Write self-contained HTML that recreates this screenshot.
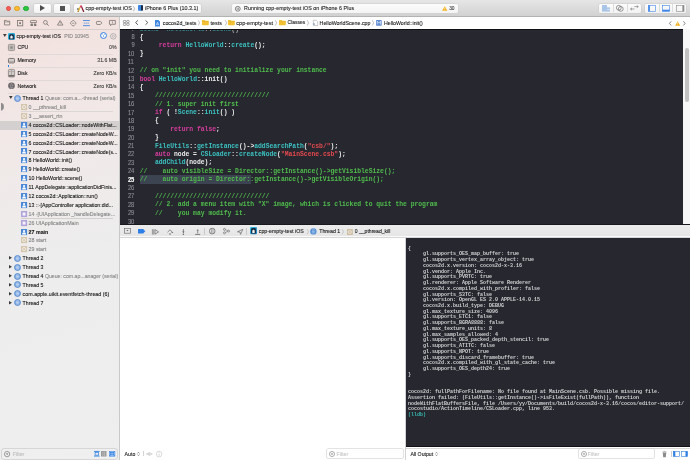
<!DOCTYPE html><html><head><meta charset="utf-8"><style>html,body{margin:0;padding:0;width:690px;height:460px;overflow:hidden;position:relative;background:#fff;font-family:"Liberation Sans",sans-serif}</style></head><body><div style="position:absolute;left:0;top:0;width:690px;height:460px;will-change:transform">
<div style="position:absolute;left:0px;top:0px;width:690px;height:16.5px;background:linear-gradient(#e6e6e6,#d0d0d0);"></div>
<div style="position:absolute;left:0px;top:16px;width:690px;height:0.6px;background:#b3b3b3;"></div>
<div style="position:absolute;left:5.5px;top:5.5px;width:5.8px;height:5.8px;border-radius:50%;background:#fc5f57;box-sizing:border-box;border:0.3px solid #de4a42;"></div>
<div style="position:absolute;left:14.200000000000001px;top:5.5px;width:5.8px;height:5.8px;border-radius:50%;background:#fdbb2e;box-sizing:border-box;border:0.3px solid #dea123;"></div>
<div style="position:absolute;left:23.0px;top:5.5px;width:5.8px;height:5.8px;border-radius:50%;background:#29c73f;box-sizing:border-box;border:0.3px solid #1caa2d;"></div>
<div style="position:absolute;left:34.4px;top:3.8px;width:16.2px;height:9.2px;background:linear-gradient(#fdfdfd,#f3f3f3);border-radius:1.6px;box-shadow:0 0 0 0.5px #c6c6c6, 0 0.4px 0.4px rgba(0,0,0,0.12);box-sizing:border-box;"></div>
<svg style="position:absolute;left:40px;top:5.2px;overflow:visible" width="5" height="6" viewBox="0 0 5 6"><path d="M0 0 L5 3 L0 6 Z" fill="#4d4d4d"/></svg>
<div style="position:absolute;left:54.3px;top:3.8px;width:16px;height:9.2px;background:linear-gradient(#fdfdfd,#f3f3f3);border-radius:1.6px;box-shadow:0 0 0 0.5px #c6c6c6, 0 0.4px 0.4px rgba(0,0,0,0.12);box-sizing:border-box;"></div>
<div style="position:absolute;left:60.1px;top:5.8px;width:4.9px;height:5.2px;background:#545454;"></div>
<div style="position:absolute;left:74.3px;top:3.8px;width:126.3px;height:9.2px;background:linear-gradient(#fdfdfd,#f3f3f3);border-radius:1.6px;box-shadow:0 0 0 0.5px #c6c6c6, 0 0.4px 0.4px rgba(0,0,0,0.12);box-sizing:border-box;"></div>
<svg style="position:absolute;left:76.6px;top:4.9px;overflow:visible" width="7.4" height="6.8" viewBox="0 0 7.4 6.8"><path d="M4.3 1.2 L6.6 6.4" stroke="#8c1d3c" stroke-width="1.3" stroke-linecap="round"/><path d="M3.6 1.2 L1.1 6.4" stroke="#e8b72a" stroke-width="1.3" stroke-linecap="round"/><circle cx="3.95" cy="1.5" r="0.9" fill="#d6338c"/><circle cx="0.9" cy="3.9" r="0.75" fill="#1e1e2a"/><circle cx="1.2" cy="6.2" r="0.55" fill="#6a4a3a"/><circle cx="6.5" cy="6.2" r="0.55" fill="#6a3a2a"/><path d="M3.0 3.6 L4.6 3.2" stroke="#fff3d0" stroke-width="0.5"/></svg>
<div style="position:absolute;left:85.6px;top:5.41px;height:7.59px;line-height:7.59px;font-size:5.42px;color:#1e1e1e;font-weight:normal;font-family:'Liberation Sans', sans-serif;white-space:pre;-webkit-text-stroke:0.1px #1e1e1e;">cpp-empty-test iOS</div>
<svg style="position:absolute;left:133.4px;top:5.8px;overflow:visible" width="2" height="5.4" viewBox="0 0 2 5.4"><path d="M0.3 0.2 L1.6 2.7 L0.3 5.2" stroke="#8a8a8a" stroke-width="0.55" fill="none"/></svg>
<svg style="position:absolute;left:137.9px;top:5.4px;overflow:visible" width="5" height="5.8" viewBox="0 0 5 5.8"><rect x="0" y="0" width="4.6" height="5.8" rx="0.7" fill="#3a86e0"/><rect x="3" y="0.3" width="2" height="5.2" rx="0.5" fill="#1d2a44"/></svg>
<div style="position:absolute;left:145px;top:5.42px;height:7.56px;line-height:7.56px;font-size:5.4px;color:#1e1e1e;font-weight:normal;font-family:'Liberation Sans', sans-serif;white-space:pre;-webkit-text-stroke:0.1px #1e1e1e;">iPhone 6 Plus (10.3.1)</div>
<div style="position:absolute;left:232px;top:3.8px;width:226px;height:9.2px;background:linear-gradient(#fbfbfb,#f4f4f4);border-radius:1.6px;box-shadow:0 0 0 0.5px #cdcdcd;"></div>
<svg style="position:absolute;left:235px;top:5.7px;overflow:visible" width="5.6" height="5.6" viewBox="0 0 5.6 5.6"><circle cx="2.8" cy="2.8" r="2.4" fill="none" stroke="#5a5a5a" stroke-width="0.75"/><path d="M2.15 1.7 V3.9 M3.45 1.7 V3.9" stroke="#5a5a5a" stroke-width="0.6"/></svg>
<div style="position:absolute;left:244.1px;top:5.49px;height:7.42px;line-height:7.42px;font-size:5.3px;color:#1e1e1e;font-weight:normal;font-family:'Liberation Sans', sans-serif;white-space:pre;-webkit-text-stroke:0.1px #1e1e1e;letter-spacing:0.045px;">Running cpp-empty-test iOS on iPhone 6 Plus</div>
<svg style="position:absolute;left:441.7px;top:5.5px;overflow:visible" width="5.5" height="5" viewBox="0 0 5.5 5"><path d="M2.75 0.2 L5.4 4.8 L0.1 4.8 Z" fill="#f2b11c"/><path d="M2.75 1.6 V3.3" stroke="#fff" stroke-width="0.6"/><circle cx="2.75" cy="4.1" r="0.3" fill="#fff"/></svg>
<div style="position:absolute;left:449.2px;top:5.84px;height:6.72px;line-height:6.72px;font-size:4.8px;color:#3a3a3a;font-weight:normal;font-family:'Liberation Sans', sans-serif;white-space:pre;-webkit-text-stroke:0.1px #3a3a3a;">30</div>
<div style="position:absolute;left:599.3px;top:3.6px;width:41.7px;height:9.4px;background:linear-gradient(#fcfcfc,#f2f2f2);border-radius:1.6px;box-shadow:0 0 0 0.5px #cacaca;"></div>
<div style="position:absolute;left:613px;top:4.4px;width:0.5px;height:7.8px;background:#dcdcdc;"></div>
<div style="position:absolute;left:627.2px;top:4.4px;width:0.5px;height:7.8px;background:#dcdcdc;"></div>
<div style="position:absolute;left:644.7px;top:3.6px;width:41.3px;height:9.4px;background:linear-gradient(#fcfcfc,#f2f2f2);border-radius:1.6px;box-shadow:0 0 0 0.5px #cacaca;"></div>
<div style="position:absolute;left:658.5px;top:4.4px;width:0.5px;height:7.8px;background:#dcdcdc;"></div>
<div style="position:absolute;left:672.2px;top:4.4px;width:0.5px;height:7.8px;background:#dcdcdc;"></div>
<svg style="position:absolute;left:602.2px;top:5px;overflow:visible" width="8" height="6.6" viewBox="0 0 8 6.6"><rect x="0" y="0" width="5" height="6.6" fill="#a8c4e6"/><rect x="5" y="2.6" width="3" height="1" fill="#7aa5dc"/><rect x="5" y="4.6" width="3" height="2" fill="#a8c4e6"/></svg>
<svg style="position:absolute;left:616.3px;top:5px;overflow:visible" width="7.6" height="6.6" viewBox="0 0 7.6 6.6"><circle cx="2.8" cy="2.8" r="2.4" fill="none" stroke="#6e6e6e" stroke-width="0.7"/><circle cx="4.8" cy="3.9" r="2.4" fill="none" stroke="#6e6e6e" stroke-width="0.7"/></svg>
<svg style="position:absolute;left:630px;top:5.4px;overflow:visible" width="8.8" height="5.6" viewBox="0 0 8.8 5.6"><path d="M0.5 4 H4.5 M0.5 4 L2 2.8 M0.5 4 L2 5.2" stroke="#6e6e6e" stroke-width="0.6" fill="none"/><path d="M4.3 1.6 H8.3 M8.3 1.6 L6.8 0.4 M8.3 1.6 L6.8 2.8" stroke="#6e6e6e" stroke-width="0.6" fill="none"/></svg>
<svg style="position:absolute;left:647.8px;top:5px;overflow:visible" width="7.8" height="6.6" viewBox="0 0 7.8 6.6"><rect x="0.3" y="0.3" width="7.2" height="6" fill="none" stroke="#3f86e8" stroke-width="0.6"/><rect x="0.3" y="0.3" width="1.6" height="6" fill="#3f86e8"/></svg>
<svg style="position:absolute;left:661.7px;top:5px;overflow:visible" width="8" height="6.6" viewBox="0 0 8 6.6"><rect x="0.3" y="0.3" width="7.4" height="6" fill="none" stroke="#3f86e8" stroke-width="0.6"/><rect x="0.3" y="4.7" width="7.4" height="1.6" fill="#3f86e8"/></svg>
<svg style="position:absolute;left:675.5px;top:5px;overflow:visible" width="8.3" height="6.6" viewBox="0 0 8.3 6.6"><rect x="0.3" y="0.3" width="7.7" height="6" fill="none" stroke="#8a8a8a" stroke-width="0.6"/><rect x="6.4" y="0.3" width="1.6" height="6" fill="#8a8a8a"/></svg>
<div style="position:absolute;left:0px;top:16.6px;width:119.5px;height:443.4px;background:linear-gradient(165deg,#f3e1dd 0%,#f1e8e7 25%,#ededed 55%,#eeeeee 100%);"></div>
<div style="position:absolute;left:119.4px;top:16.6px;width:0.7px;height:443.4px;background:#c9c9c9;"></div>
<div style="position:absolute;left:0px;top:28.9px;width:119.5px;height:0.5px;background:#d9d0ce;"></div>
<svg style="position:absolute;left:3.8px;top:20.4px;overflow:visible" width="6.2" height="5.4" viewBox="0 0 6.2 5.4"><path d="M0.45 0.45 H2.4 L3 1.2 H5.75 V4.95 H0.45 Z" fill="none" stroke="#7f7975" stroke-width="0.85" stroke-linejoin="round"/><path d="M0.45 1.9 H5.75" stroke="#7f7975" stroke-width="0.6"/></svg>
<svg style="position:absolute;left:16.8px;top:19.9px;overflow:visible" width="6.2" height="6.3" viewBox="0 0 6.2 6.3"><rect x="0.45" y="0.45" width="5.3" height="5.4" fill="none" stroke="#7f7975" stroke-width="0.85"/><rect x="2.2" y="2.2" width="1.8" height="1.9" fill="#7f7975"/></svg>
<svg style="position:absolute;left:29.9px;top:20.1px;overflow:visible" width="6.9" height="6" viewBox="0 0 6.9 6"><path d="M0.45 2.6 V1.2 Q0.45 0.45 1.2 0.45 H5.7 Q6.45 0.45 6.45 1.2 V2.6 Z" fill="none" stroke="#7f7975" stroke-width="0.85"/><path d="M1.9 2.6 V4.4 M5 2.6 V4.4" stroke="#7f7975" stroke-width="0.85"/><rect x="0.5" y="4.1" width="2.5" height="1.8" rx="0.5" fill="#7f7975"/><rect x="3.9" y="4.1" width="2.5" height="1.8" rx="0.5" fill="#7f7975"/></svg>
<svg style="position:absolute;left:43.3px;top:20.1px;overflow:visible" width="5.8" height="5.8" viewBox="0 0 5.8 5.8"><circle cx="2.4" cy="2.4" r="1.9" fill="none" stroke="#7f7975" stroke-width="0.85"/><path d="M3.8 3.8 L5.4 5.5" stroke="#7f7975" stroke-width="0.95" stroke-linecap="round"/></svg>
<svg style="position:absolute;left:56.9px;top:20.4px;overflow:visible" width="6.4" height="5.6" viewBox="0 0 6.4 5.6"><path d="M3.2 0.5 L5.95 5.1 H0.45 Z" fill="none" stroke="#7f7975" stroke-width="0.85" stroke-linejoin="round"/><path d="M3.2 2 V3.6" stroke="#7f7975" stroke-width="0.7"/></svg>
<svg style="position:absolute;left:69.9px;top:19.8px;overflow:visible" width="6.4" height="6.4" viewBox="0 0 6.4 6.4"><path d="M3.2 0.45 Q3.9 0.45 4.8 1.6 Q5.95 2.5 5.95 3.2 Q5.95 3.9 4.8 4.8 Q3.9 5.95 3.2 5.95 Q2.5 5.95 1.6 4.8 Q0.45 3.9 0.45 3.2 Q0.45 2.5 1.6 1.6 Q2.5 0.45 3.2 0.45 Z" fill="none" stroke="#7f7975" stroke-width="0.85"/><path d="M2 3.2 H4.4" stroke="#7f7975" stroke-width="0.7"/></svg>
<svg style="position:absolute;left:82.7px;top:20.0px;overflow:visible" width="6.9" height="6.1" viewBox="0 0 6.9 6.1"><rect x="0" y="0" width="6.9" height="0.85" fill="#3a82de"/><rect x="0" y="5.25" width="6.9" height="0.85" fill="#3a82de"/><path d="M0.8 3.05 H6.1" stroke="#5b95df" stroke-width="1.2" stroke-dasharray="0.55 0.35 0.55 0.6"/></svg>
<svg style="position:absolute;left:96.1px;top:21.1px;overflow:visible" width="6.3" height="3.9" viewBox="0 0 6.3 3.9"><path d="M1.1 0.45 H4.5 L5.85 1.95 L4.5 3.45 H1.1 Q0.45 3.45 0.45 2.8 V1.1 Q0.45 0.45 1.1 0.45 Z" fill="none" stroke="#7f7975" stroke-width="0.85"/></svg>
<svg style="position:absolute;left:109.2px;top:20.0px;overflow:visible" width="6.8" height="6.2" viewBox="0 0 6.8 6.2"><path d="M0.45 0.45 H6.35 V4.3 H2.7 L1.5 5.7 V4.3 H0.45 Z" fill="none" stroke="#7f7975" stroke-width="0.85" stroke-linejoin="round"/><path d="M3.4 1.3 V3.4" stroke="#7f7975" stroke-width="0.7"/></svg>
<svg style="position:absolute;left:2.9px;top:34.199999999999996px;overflow:visible" width="3.6" height="3.0" viewBox="0 0 3.6 3.0"><path d="M0 0 H3.6 L1.8 3.0 Z" fill="#3a3a3a"/></svg>
<svg style="position:absolute;left:7.8px;top:32.5px;overflow:visible" width="7" height="6.8" viewBox="0 0 7 6.8"><defs><linearGradient id="ag" x1="0" y1="0" x2="1" y2="1"><stop offset="0" stop-color="#35c4e8"/><stop offset="1" stop-color="#1a7fb8"/></linearGradient></defs><rect x="0" y="0" width="7" height="6.8" rx="1.2" fill="url(#ag)"/><path d="M1.2 6.2 V2.6 Q1.2 1.2 2.6 1.2 H4.4 Q5.8 1.2 5.8 2.6 V6.2 Z" fill="#15263a"/><path d="M2.3 5.6 V3.4 L3.5 2.3 L4.7 3.4 V5.6 Z" fill="#f2f2f2"/></svg>
<div style="position:absolute;left:16.5px;top:32.96px;height:7.28px;line-height:7.28px;font-size:5.2px;color:#161616;font-weight:normal;font-family:'Liberation Sans', sans-serif;white-space:pre;-webkit-text-stroke:0.1px #161616;">cpp-empty-test iOS</div>
<div style="position:absolute;left:64.3px;top:32.96px;height:7.28px;line-height:7.28px;font-size:5.2px;color:#858585;font-weight:normal;font-family:'Liberation Sans', sans-serif;white-space:pre;-webkit-text-stroke:0.1px #858585;">PID 10945</div>
<svg style="position:absolute;left:100.1px;top:32.4px;overflow:visible" width="7" height="7" viewBox="0 0 7 7"><circle cx="3.5" cy="3.5" r="2.95" fill="#fdfdfd" stroke="#2a76e2" stroke-width="0.95"/><path d="M3.3 4.9 L3.5 3.4 L4.7 2.3" fill="none" stroke="#2a76e2" stroke-width="0.6"/><path d="M1.6 2.6 Q2.2 1.9 3 1.8" fill="none" stroke="#2a76e2" stroke-width="0.45"/></svg>
<svg style="position:absolute;left:110.0px;top:32.7px;overflow:visible" width="6.6" height="6.6" viewBox="0 0 6.6 6.6"><circle cx="3.3" cy="3.3" r="2.8" fill="none" stroke="#a6a6a6" stroke-width="0.8"/><circle cx="3.3" cy="3.3" r="1.1" fill="none" stroke="#a6a6a6" stroke-width="0.6"/></svg>
<svg style="position:absolute;left:7.8px;top:43.9px;overflow:visible" width="7" height="7" viewBox="0 0 7 7"><rect x="0.4" y="0.4" width="6.2" height="6.2" rx="1" fill="#c4bebb" stroke="#8e8885" stroke-width="0.8"/><rect x="2.3" y="2.3" width="2.4" height="2.4" fill="#8e8885"/></svg>
<svg style="position:absolute;left:7.8px;top:57.6px;overflow:visible" width="7" height="5.4" viewBox="0 0 7 5.4"><rect x="0.45" y="0.45" width="6.1" height="4.5" rx="0.9" fill="#d3cdca" stroke="#6e6866" stroke-width="0.9"/><path d="M1 3.4 H6" stroke="#8e8885" stroke-width="0.5"/></svg>
<svg style="position:absolute;left:7.8px;top:69.0px;overflow:visible" width="7" height="8.4" viewBox="0 0 7 8.4"><rect x="0.4" y="0.4" width="6.2" height="7.6" rx="1" fill="#d2ccc9" stroke="#8a8482" stroke-width="0.8"/><path d="M3.5 0.8 V6 M1 2.5 H2.8 M4.2 2.5 H6" stroke="#8a8482" stroke-width="0.5"/><rect x="0.8" y="6" width="5.4" height="1.6" fill="#6e6866"/></svg>
<svg style="position:absolute;left:7.8px;top:82.1px;overflow:visible" width="7" height="7.4" viewBox="0 0 7 7.4"><circle cx="3.5" cy="3.7" r="3.3" fill="#5a5658"/><path d="M0.5 3.7 H6.5 M3.5 0.5 Q1.4 3.7 3.5 6.9 Q5.6 3.7 3.5 0.5 M1 2.1 H6 M1 5.3 H6" stroke="#bdb9ba" stroke-width="0.4" fill="none"/></svg>
<div style="position:absolute;left:8.0px;top:64.8px;width:0.8px;height:2.2px;background:#2f7fe2;"></div>
<div style="position:absolute;left:17.4px;top:43.76px;height:7.28px;line-height:7.28px;font-size:5.2px;color:#161616;font-weight:normal;font-family:'Liberation Sans', sans-serif;white-space:pre;-webkit-text-stroke:0.1px #161616;">CPU</div>
<div style="position:absolute;right:573.4px;top:43.76px;height:7.28px;line-height:7.28px;font-size:5.2px;color:#3e3e3e;font-weight:normal;font-family:'Liberation Sans', sans-serif;white-space:pre;-webkit-text-stroke:0.1px #3e3e3e;">0%</div>
<div style="position:absolute;left:17.4px;top:57.16px;height:7.28px;line-height:7.28px;font-size:5.2px;color:#161616;font-weight:normal;font-family:'Liberation Sans', sans-serif;white-space:pre;-webkit-text-stroke:0.1px #161616;">Memory</div>
<div style="position:absolute;right:573.4px;top:57.16px;height:7.28px;line-height:7.28px;font-size:5.2px;color:#3e3e3e;font-weight:normal;font-family:'Liberation Sans', sans-serif;white-space:pre;-webkit-text-stroke:0.1px #3e3e3e;">31.6 MB</div>
<div style="position:absolute;left:17.4px;top:70.36px;height:7.28px;line-height:7.28px;font-size:5.2px;color:#161616;font-weight:normal;font-family:'Liberation Sans', sans-serif;white-space:pre;-webkit-text-stroke:0.1px #161616;">Disk</div>
<div style="position:absolute;right:573.4px;top:70.36px;height:7.28px;line-height:7.28px;font-size:5.2px;color:#3e3e3e;font-weight:normal;font-family:'Liberation Sans', sans-serif;white-space:pre;-webkit-text-stroke:0.1px #3e3e3e;">Zero KB/s</div>
<div style="position:absolute;left:17.4px;top:82.96px;height:7.28px;line-height:7.28px;font-size:5.2px;color:#161616;font-weight:normal;font-family:'Liberation Sans', sans-serif;white-space:pre;-webkit-text-stroke:0.1px #161616;">Network</div>
<div style="position:absolute;right:573.4px;top:82.96px;height:7.28px;line-height:7.28px;font-size:5.2px;color:#3e3e3e;font-weight:normal;font-family:'Liberation Sans', sans-serif;white-space:pre;-webkit-text-stroke:0.1px #3e3e3e;">Zero KB/s</div>
<div style="position:absolute;left:7.8px;top:54.3px;width:105.2px;height:0.5px;background:#e0d9d8;"></div>
<div style="position:absolute;left:7.8px;top:67.2px;width:105.2px;height:0.5px;background:#e0d9d8;"></div>
<div style="position:absolute;left:7.8px;top:79.9px;width:105.2px;height:0.5px;background:#e0d9d8;"></div>
<div style="position:absolute;left:7.8px;top:93.0px;width:105.2px;height:0.5px;background:#e0d9d8;"></div>
<div style="position:absolute;left:0px;top:121.0px;width:119.4px;height:8.5px;background:#d4d0cf;"></div>
<svg style="position:absolute;left:0.9px;top:102.9px;overflow:visible" width="3" height="7.4" viewBox="0 0 3 7.4"><path d="M0 0 H1 Q3 0.8 3 3.7 Q3 6.6 1 7.4 H0 Z" fill="#8d8d8d"/></svg>
<svg style="position:absolute;left:9.1px;top:96.4px;overflow:visible" width="3.6" height="3.0" viewBox="0 0 3.6 3.0"><path d="M0 0 H3.6 L1.8 3.0 Z" fill="#3a3a3a"/></svg>
<svg style="position:absolute;left:14.1px;top:94.5px;overflow:visible" width="7" height="7" viewBox="0 0 7 7"><circle cx="3.5" cy="3.5" r="3.0" fill="#86aee2" stroke="#4f86cf" stroke-width="0.8"/><path d="M2.2 2.2 H4.8 M2.0 3.5 H5.0 M2.2 4.8 H4.8" stroke="#e6eefa" stroke-width="0.5"/></svg>
<div style="position:absolute;left:22.6px;top:95.16px;height:7.28px;line-height:7.28px;font-size:5.2px;color:#161616;font-weight:normal;font-family:'Liberation Sans', sans-serif;white-space:pre;-webkit-text-stroke:0.1px #161616;">Thread 1</div>
<div style="position:absolute;left:44.9px;top:95.16px;height:7.28px;line-height:7.28px;font-size:5.2px;color:#888888;font-weight:normal;font-family:'Liberation Sans', sans-serif;white-space:pre;-webkit-text-stroke:0.1px #888888;">Queue: com.a...-thread (serial)</div>
<svg style="position:absolute;left:20.5px;top:103.9px;overflow:visible" width="6.1" height="6.1" viewBox="0 0 6.1 6.1"><rect x="0" y="0" width="6.1" height="6.1" fill="#d3c6ad"/><circle cx="3.05" cy="3.05" r="1.6" fill="none" stroke="#fff" stroke-width="0.6"/><path d="M2.6 3.05 L3.4 2.4" stroke="#fff" stroke-width="0.5"/></svg>
<div style="position:absolute;left:28.6px;top:103.99px;height:7.42px;line-height:7.42px;font-size:5.3px;color:#858585;font-weight:normal;font-family:'Liberation Sans', sans-serif;white-space:pre;-webkit-text-stroke:0.1px #858585;">0 __pthread_kill</div>
<svg style="position:absolute;left:20.5px;top:112.8px;overflow:visible" width="6.1" height="6.1" viewBox="0 0 6.1 6.1"><rect x="0" y="0" width="6.1" height="6.1" fill="#d3c6ad"/><circle cx="3.05" cy="3.05" r="1.6" fill="none" stroke="#fff" stroke-width="0.6"/><path d="M2.6 3.05 L3.4 2.4" stroke="#fff" stroke-width="0.5"/></svg>
<div style="position:absolute;left:28.6px;top:112.89px;height:7.42px;line-height:7.42px;font-size:5.3px;color:#858585;font-weight:normal;font-family:'Liberation Sans', sans-serif;white-space:pre;-webkit-text-stroke:0.1px #858585;">3 __assert_rtn</div>
<svg style="position:absolute;left:20.5px;top:121.7px;overflow:visible" width="6.1" height="6.1" viewBox="0 0 6.1 6.1"><rect x="0" y="0" width="6.1" height="6.1" fill="#4b89d8"/><circle cx="3.05" cy="2.1" r="1.1" fill="#fff"/><path d="M1 5.4 Q1.2 3.3 3.05 3.3 Q4.9 3.3 5.1 5.4 Z" fill="#fff"/></svg>
<div style="position:absolute;left:28.6px;top:121.85px;height:7.31px;line-height:7.31px;font-size:5.22px;color:#161616;font-weight:normal;font-family:'Liberation Sans', sans-serif;white-space:pre;-webkit-text-stroke:0.1px #161616;">4 cocos2d::CSLoader::nodeWithFlat...</div>
<svg style="position:absolute;left:20.5px;top:130.6px;overflow:visible" width="6.1" height="6.1" viewBox="0 0 6.1 6.1"><rect x="0" y="0" width="6.1" height="6.1" fill="#4b89d8"/><circle cx="3.05" cy="2.1" r="1.1" fill="#fff"/><path d="M1 5.4 Q1.2 3.3 3.05 3.3 Q4.9 3.3 5.1 5.4 Z" fill="#fff"/></svg>
<div style="position:absolute;left:28.6px;top:130.75px;height:7.31px;line-height:7.31px;font-size:5.22px;color:#161616;font-weight:normal;font-family:'Liberation Sans', sans-serif;white-space:pre;-webkit-text-stroke:0.1px #161616;">5 cocos2d::CSLoader::createNodeW...</div>
<svg style="position:absolute;left:20.5px;top:139.5px;overflow:visible" width="6.1" height="6.1" viewBox="0 0 6.1 6.1"><rect x="0" y="0" width="6.1" height="6.1" fill="#4b89d8"/><circle cx="3.05" cy="2.1" r="1.1" fill="#fff"/><path d="M1 5.4 Q1.2 3.3 3.05 3.3 Q4.9 3.3 5.1 5.4 Z" fill="#fff"/></svg>
<div style="position:absolute;left:28.6px;top:139.65px;height:7.31px;line-height:7.31px;font-size:5.22px;color:#161616;font-weight:normal;font-family:'Liberation Sans', sans-serif;white-space:pre;-webkit-text-stroke:0.1px #161616;">6 cocos2d::CSLoader::createNodeW...</div>
<svg style="position:absolute;left:20.5px;top:148.4px;overflow:visible" width="6.1" height="6.1" viewBox="0 0 6.1 6.1"><rect x="0" y="0" width="6.1" height="6.1" fill="#4b89d8"/><circle cx="3.05" cy="2.1" r="1.1" fill="#fff"/><path d="M1 5.4 Q1.2 3.3 3.05 3.3 Q4.9 3.3 5.1 5.4 Z" fill="#fff"/></svg>
<div style="position:absolute;left:28.6px;top:148.55px;height:7.31px;line-height:7.31px;font-size:5.22px;color:#161616;font-weight:normal;font-family:'Liberation Sans', sans-serif;white-space:pre;-webkit-text-stroke:0.1px #161616;">7 cocos2d::CSLoader::createNode(s...</div>
<svg style="position:absolute;left:20.5px;top:157.3px;overflow:visible" width="6.1" height="6.1" viewBox="0 0 6.1 6.1"><rect x="0" y="0" width="6.1" height="6.1" fill="#4b89d8"/><circle cx="3.05" cy="2.1" r="1.1" fill="#fff"/><path d="M1 5.4 Q1.2 3.3 3.05 3.3 Q4.9 3.3 5.1 5.4 Z" fill="#fff"/></svg>
<div style="position:absolute;left:28.6px;top:157.39px;height:7.42px;line-height:7.42px;font-size:5.3px;color:#161616;font-weight:normal;font-family:'Liberation Sans', sans-serif;white-space:pre;-webkit-text-stroke:0.1px #161616;">8 HelloWorld::init()</div>
<svg style="position:absolute;left:20.5px;top:166.2px;overflow:visible" width="6.1" height="6.1" viewBox="0 0 6.1 6.1"><rect x="0" y="0" width="6.1" height="6.1" fill="#4b89d8"/><circle cx="3.05" cy="2.1" r="1.1" fill="#fff"/><path d="M1 5.4 Q1.2 3.3 3.05 3.3 Q4.9 3.3 5.1 5.4 Z" fill="#fff"/></svg>
<div style="position:absolute;left:28.6px;top:166.29px;height:7.42px;line-height:7.42px;font-size:5.3px;color:#161616;font-weight:normal;font-family:'Liberation Sans', sans-serif;white-space:pre;-webkit-text-stroke:0.1px #161616;">9 HelloWorld::create()</div>
<svg style="position:absolute;left:20.5px;top:175.10000000000002px;overflow:visible" width="6.1" height="6.1" viewBox="0 0 6.1 6.1"><rect x="0" y="0" width="6.1" height="6.1" fill="#4b89d8"/><circle cx="3.05" cy="2.1" r="1.1" fill="#fff"/><path d="M1 5.4 Q1.2 3.3 3.05 3.3 Q4.9 3.3 5.1 5.4 Z" fill="#fff"/></svg>
<div style="position:absolute;left:28.6px;top:175.19px;height:7.42px;line-height:7.42px;font-size:5.3px;color:#161616;font-weight:normal;font-family:'Liberation Sans', sans-serif;white-space:pre;-webkit-text-stroke:0.1px #161616;">10 HelloWorld::scene()</div>
<svg style="position:absolute;left:20.5px;top:184.0px;overflow:visible" width="6.1" height="6.1" viewBox="0 0 6.1 6.1"><rect x="0" y="0" width="6.1" height="6.1" fill="#4b89d8"/><circle cx="3.05" cy="2.1" r="1.1" fill="#fff"/><path d="M1 5.4 Q1.2 3.3 3.05 3.3 Q4.9 3.3 5.1 5.4 Z" fill="#fff"/></svg>
<div style="position:absolute;left:28.6px;top:184.15px;height:7.31px;line-height:7.31px;font-size:5.22px;color:#161616;font-weight:normal;font-family:'Liberation Sans', sans-serif;white-space:pre;-webkit-text-stroke:0.1px #161616;">11 AppDelegate::applicationDidFinis...</div>
<svg style="position:absolute;left:20.5px;top:192.9px;overflow:visible" width="6.1" height="6.1" viewBox="0 0 6.1 6.1"><rect x="0" y="0" width="6.1" height="6.1" fill="#4b89d8"/><circle cx="3.05" cy="2.1" r="1.1" fill="#fff"/><path d="M1 5.4 Q1.2 3.3 3.05 3.3 Q4.9 3.3 5.1 5.4 Z" fill="#fff"/></svg>
<div style="position:absolute;left:28.6px;top:193.05px;height:7.31px;line-height:7.31px;font-size:5.22px;color:#161616;font-weight:normal;font-family:'Liberation Sans', sans-serif;white-space:pre;-webkit-text-stroke:0.1px #161616;">12 cocos2d::Application::run()</div>
<svg style="position:absolute;left:20.5px;top:201.8px;overflow:visible" width="6.1" height="6.1" viewBox="0 0 6.1 6.1"><rect x="0" y="0" width="6.1" height="6.1" fill="#4b89d8"/><circle cx="3.05" cy="2.1" r="1.1" fill="#fff"/><path d="M1 5.4 Q1.2 3.3 3.05 3.3 Q4.9 3.3 5.1 5.4 Z" fill="#fff"/></svg>
<div style="position:absolute;left:28.6px;top:201.95px;height:7.31px;line-height:7.31px;font-size:5.22px;color:#161616;font-weight:normal;font-family:'Liberation Sans', sans-serif;white-space:pre;-webkit-text-stroke:0.1px #161616;">13 ::-[AppController application:did...</div>
<svg style="position:absolute;left:20.5px;top:210.7px;overflow:visible" width="6.1" height="6.1" viewBox="0 0 6.1 6.1"><rect x="0" y="0" width="6.1" height="6.1" fill="#b0a3d8"/><rect x="1.6" y="1.5" width="2.9" height="3.1" fill="#f4f2fa"/></svg>
<div style="position:absolute;left:28.6px;top:210.85px;height:7.31px;line-height:7.31px;font-size:5.22px;color:#858585;font-weight:normal;font-family:'Liberation Sans', sans-serif;white-space:pre;-webkit-text-stroke:0.1px #858585;">14 -[UIApplication _handleDelegate...</div>
<svg style="position:absolute;left:20.5px;top:219.60000000000002px;overflow:visible" width="6.1" height="6.1" viewBox="0 0 6.1 6.1"><rect x="0" y="0" width="6.1" height="6.1" fill="#b0a3d8"/><rect x="1.6" y="1.5" width="2.9" height="3.1" fill="#f4f2fa"/></svg>
<div style="position:absolute;left:28.6px;top:219.69px;height:7.42px;line-height:7.42px;font-size:5.3px;color:#858585;font-weight:normal;font-family:'Liberation Sans', sans-serif;white-space:pre;-webkit-text-stroke:0.1px #858585;">26 UIApplicationMain</div>
<svg style="position:absolute;left:20.5px;top:228.5px;overflow:visible" width="6.1" height="6.1" viewBox="0 0 6.1 6.1"><rect x="0" y="0" width="6.1" height="6.1" fill="#4b89d8"/><circle cx="3.05" cy="2.1" r="1.1" fill="#fff"/><path d="M1 5.4 Q1.2 3.3 3.05 3.3 Q4.9 3.3 5.1 5.4 Z" fill="#fff"/></svg>
<div style="position:absolute;left:28.6px;top:228.59px;height:7.42px;line-height:7.42px;font-size:5.3px;color:#161616;font-weight:bold;font-family:'Liberation Sans', sans-serif;white-space:pre;-webkit-text-stroke:0.1px #161616;">27 main</div>
<svg style="position:absolute;left:20.5px;top:237.4px;overflow:visible" width="6.1" height="6.1" viewBox="0 0 6.1 6.1"><rect x="0" y="0" width="6.1" height="6.1" fill="#d3c6ad"/><circle cx="3.05" cy="3.05" r="1.6" fill="none" stroke="#fff" stroke-width="0.6"/><path d="M2.6 3.05 L3.4 2.4" stroke="#fff" stroke-width="0.5"/></svg>
<div style="position:absolute;left:28.6px;top:237.49px;height:7.42px;line-height:7.42px;font-size:5.3px;color:#858585;font-weight:normal;font-family:'Liberation Sans', sans-serif;white-space:pre;-webkit-text-stroke:0.1px #858585;">28 start</div>
<svg style="position:absolute;left:20.5px;top:246.3px;overflow:visible" width="6.1" height="6.1" viewBox="0 0 6.1 6.1"><rect x="0" y="0" width="6.1" height="6.1" fill="#d3c6ad"/><circle cx="3.05" cy="3.05" r="1.6" fill="none" stroke="#fff" stroke-width="0.6"/><path d="M2.6 3.05 L3.4 2.4" stroke="#fff" stroke-width="0.5"/></svg>
<div style="position:absolute;left:28.6px;top:246.39px;height:7.42px;line-height:7.42px;font-size:5.3px;color:#858585;font-weight:normal;font-family:'Liberation Sans', sans-serif;white-space:pre;-webkit-text-stroke:0.1px #858585;">29 start</div>
<div style="position:absolute;left:20.5px;top:111.3px;width:92.5px;height:0.5px;background:#dcd6d5;"></div>
<div style="position:absolute;left:20.5px;top:218.0px;width:92.5px;height:0.5px;background:#d2cfce;"></div>
<svg style="position:absolute;left:9.4px;top:256.40000000000003px;overflow:visible" width="3.0" height="3.6" viewBox="0 0 3.0 3.6"><path d="M0 0 V3.6 L3.0 1.8 Z" fill="#3a3a3a"/></svg>
<svg style="position:absolute;left:14.1px;top:254.70000000000005px;overflow:visible" width="7" height="7" viewBox="0 0 7 7"><circle cx="3.5" cy="3.5" r="3.0" fill="#86aee2" stroke="#4f86cf" stroke-width="0.8"/><path d="M2.2 2.2 H4.8 M2.0 3.5 H5.0 M2.2 4.8 H4.8" stroke="#e6eefa" stroke-width="0.5"/></svg>
<div style="position:absolute;left:22.6px;top:255.36px;height:7.28px;line-height:7.28px;font-size:5.2px;color:#161616;font-weight:normal;font-family:'Liberation Sans', sans-serif;white-space:pre;-webkit-text-stroke:0.1px #161616;">Thread 2</div>
<svg style="position:absolute;left:9.4px;top:265.3px;overflow:visible" width="3.0" height="3.6" viewBox="0 0 3.0 3.6"><path d="M0 0 V3.6 L3.0 1.8 Z" fill="#3a3a3a"/></svg>
<svg style="position:absolute;left:14.1px;top:263.6px;overflow:visible" width="7" height="7" viewBox="0 0 7 7"><circle cx="3.5" cy="3.5" r="3.0" fill="#86aee2" stroke="#4f86cf" stroke-width="0.8"/><path d="M2.2 2.2 H4.8 M2.0 3.5 H5.0 M2.2 4.8 H4.8" stroke="#e6eefa" stroke-width="0.5"/></svg>
<div style="position:absolute;left:22.6px;top:264.26px;height:7.28px;line-height:7.28px;font-size:5.2px;color:#161616;font-weight:normal;font-family:'Liberation Sans', sans-serif;white-space:pre;-webkit-text-stroke:0.1px #161616;">Thread 3</div>
<svg style="position:absolute;left:9.4px;top:274.2px;overflow:visible" width="3.0" height="3.6" viewBox="0 0 3.0 3.6"><path d="M0 0 V3.6 L3.0 1.8 Z" fill="#3a3a3a"/></svg>
<svg style="position:absolute;left:14.1px;top:272.5px;overflow:visible" width="7" height="7" viewBox="0 0 7 7"><circle cx="3.5" cy="3.5" r="3.0" fill="#86aee2" stroke="#4f86cf" stroke-width="0.8"/><path d="M2.2 2.2 H4.8 M2.0 3.5 H5.0 M2.2 4.8 H4.8" stroke="#e6eefa" stroke-width="0.5"/></svg>
<div style="position:absolute;left:22.6px;top:273.16px;height:7.28px;line-height:7.28px;font-size:5.2px;color:#161616;font-weight:normal;font-family:'Liberation Sans', sans-serif;white-space:pre;-webkit-text-stroke:0.1px #161616;">Thread 4</div>
<div style="position:absolute;left:44.9px;top:273.16px;height:7.28px;line-height:7.28px;font-size:5.2px;color:#888888;font-weight:normal;font-family:'Liberation Sans', sans-serif;white-space:pre;-webkit-text-stroke:0.1px #888888;">Queue: com.ap...anager (serial)</div>
<svg style="position:absolute;left:9.4px;top:283.09999999999997px;overflow:visible" width="3.0" height="3.6" viewBox="0 0 3.0 3.6"><path d="M0 0 V3.6 L3.0 1.8 Z" fill="#3a3a3a"/></svg>
<svg style="position:absolute;left:14.1px;top:281.4px;overflow:visible" width="7" height="7" viewBox="0 0 7 7"><circle cx="3.5" cy="3.5" r="3.0" fill="#86aee2" stroke="#4f86cf" stroke-width="0.8"/><path d="M2.2 2.2 H4.8 M2.0 3.5 H5.0 M2.2 4.8 H4.8" stroke="#e6eefa" stroke-width="0.5"/></svg>
<div style="position:absolute;left:22.6px;top:282.06px;height:7.28px;line-height:7.28px;font-size:5.2px;color:#161616;font-weight:normal;font-family:'Liberation Sans', sans-serif;white-space:pre;-webkit-text-stroke:0.1px #161616;">Thread 5</div>
<svg style="position:absolute;left:9.4px;top:292.0px;overflow:visible" width="3.0" height="3.6" viewBox="0 0 3.0 3.6"><path d="M0 0 V3.6 L3.0 1.8 Z" fill="#3a3a3a"/></svg>
<svg style="position:absolute;left:14.1px;top:290.3px;overflow:visible" width="7" height="7" viewBox="0 0 7 7"><circle cx="3.5" cy="3.5" r="3.0" fill="#86aee2" stroke="#4f86cf" stroke-width="0.8"/><path d="M2.2 2.2 H4.8 M2.0 3.5 H5.0 M2.2 4.8 H4.8" stroke="#e6eefa" stroke-width="0.5"/></svg>
<div style="position:absolute;left:22.6px;top:290.86px;height:7.49px;line-height:7.49px;font-size:5.35px;color:#161616;font-weight:normal;font-family:'Liberation Sans', sans-serif;white-space:pre;-webkit-text-stroke:0.1px #161616;">com.apple.uikit.eventfetch-thread (6)</div>
<svg style="position:absolute;left:9.4px;top:300.90000000000003px;overflow:visible" width="3.0" height="3.6" viewBox="0 0 3.0 3.6"><path d="M0 0 V3.6 L3.0 1.8 Z" fill="#3a3a3a"/></svg>
<svg style="position:absolute;left:14.1px;top:299.20000000000005px;overflow:visible" width="7" height="7" viewBox="0 0 7 7"><circle cx="3.5" cy="3.5" r="3.0" fill="#86aee2" stroke="#4f86cf" stroke-width="0.8"/><path d="M2.2 2.2 H4.8 M2.0 3.5 H5.0 M2.2 4.8 H4.8" stroke="#e6eefa" stroke-width="0.5"/></svg>
<div style="position:absolute;left:22.6px;top:299.86px;height:7.28px;line-height:7.28px;font-size:5.2px;color:#161616;font-weight:normal;font-family:'Liberation Sans', sans-serif;white-space:pre;-webkit-text-stroke:0.1px #161616;">Thread 7</div>
<div style="position:absolute;left:2.4px;top:449.0px;width:114.8px;height:9.6px;background:#efefef;border-radius:1.6px;box-shadow:0 0 0 0.5px #bdbdbd;"></div>
<svg style="position:absolute;left:3.9px;top:451.2px;overflow:visible" width="6.2" height="6.2" viewBox="0 0 6.2 6.2"><circle cx="3.1" cy="3.1" r="2.65" fill="none" stroke="#6f6f6f" stroke-width="0.65"/><path d="M1.8 2.4 H4.4 L3.1 4.1 Z" fill="#6f6f6f"/></svg>
<div style="position:absolute;left:12.8px;top:451.06px;height:7.28px;line-height:7.28px;font-size:5.2px;color:#bdbdbd;font-weight:normal;font-family:'Liberation Sans', sans-serif;white-space:pre;-webkit-text-stroke:0.1px #bdbdbd;">Filter</div>
<svg style="position:absolute;left:94px;top:451.1px;overflow:visible" width="5.6" height="5.5" viewBox="0 0 5.6 5.5"><path d="M0 0.45 H5.6 M0 5.05 H5.6" stroke="#2f7fe2" stroke-width="0.9"/><rect x="1.1" y="1.4" width="3.4" height="2.7" fill="none" stroke="#2f7fe2" stroke-width="0.7"/></svg>
<svg style="position:absolute;left:101.2px;top:451.1px;overflow:visible" width="5.5" height="5.5" viewBox="0 0 5.5 5.5"><rect x="0" y="0" width="5.5" height="5.5" fill="#9a9a9a"/><path d="M1.9 0.6 V4.9 M3.6 0.6 V4.9" stroke="#dcdcdc" stroke-width="0.45"/></svg>
<svg style="position:absolute;left:108.7px;top:451.1px;overflow:visible" width="6.2" height="5.5" viewBox="0 0 6.2 5.5"><rect x="0" y="0" width="6.2" height="5.5" fill="#2f7fe2"/><rect x="0.8" y="0.8" width="4.6" height="3.9" fill="none" stroke="#d6e6fb" stroke-width="0.45"/><path d="M3.1 0.8 V4.7 M0.8 2.75 H5.4" stroke="#d6e6fb" stroke-width="0.45"/></svg>
<div style="position:absolute;left:120px;top:16.6px;width:570px;height:12.6px;background:#fff;"></div>
<div style="position:absolute;left:120px;top:29.2px;width:563px;height:195.4px;background:#27282f;"></div>
<div style="position:absolute;left:120px;top:28.6px;width:570px;height:0.6px;background:#f6f6f6;"></div>
<div style="position:absolute;left:120px;top:29.2px;width:563px;height:1.3px;background:#100f17;"></div>
<div style="position:absolute;left:682.6px;top:29.2px;width:0.6px;height:195.4px;background:#141418;"></div>
<div style="position:absolute;left:683.2px;top:29.2px;width:6.8px;height:195.4px;background:#f7f7f7;"></div>
<div style="position:absolute;left:685.3px;top:47.8px;width:3.4px;height:54.4px;background:#c2c2c2;border-radius:2px;"></div>
<div style="position:absolute;left:120px;top:224.6px;width:570px;height:13.2px;background:linear-gradient(#ececec,#e5e5e5);"></div>
<div style="position:absolute;left:120px;top:224.4px;width:570px;height:0.5px;background:#1a1a1e;"></div>
<div style="position:absolute;left:120px;top:235.6px;width:570px;height:1.6px;background:#fafafa;"></div>
<div style="position:absolute;left:120px;top:237.2px;width:570px;height:0.5px;background:#d6d6d6;"></div>
<div style="position:absolute;left:120px;top:237.5px;width:285.5px;height:222.5px;background:#fff;"></div>
<div style="position:absolute;left:405.0px;top:237.5px;width:0.7px;height:222.5px;background:#d2d2d2;"></div>
<div style="position:absolute;left:406.1px;top:237.6px;width:283.9px;height:209.4px;background:#27282f;"></div>
<div style="position:absolute;left:406.1px;top:446.2px;width:283.9px;height:1.0px;background:#121119;"></div>
<div style="position:absolute;left:406.1px;top:447.6px;width:283.9px;height:0.5px;background:#d8d8d8;"></div>
<div style="position:absolute;left:120px;top:29.8px;width:562.6px;height:194.6px;overflow:hidden">
<div style="position:absolute;left:19.70px;top:145.33px;width:110.95px;height:8.39px;background:#3c4452"></div>
<div style="position:absolute;right:548.40px;top:-5.59px;height:10px;line-height:10px;font-size:6.6px;font-family:'Liberation Sans', sans-serif;color:#8f9096;font-weight:normal;transform:scaleX(0.88);transform-origin:100% 50%;-webkit-text-stroke:0.1px #8f9096">7</div>
<div style="position:absolute;left:19.70px;top:-4.99px;height:10px;line-height:10px;font-size:6.377px;font-family:'Liberation Mono', monospace;font-weight:bold;white-space:pre;opacity:0.6"><span style="color:#3bc2c2">Scene</span><span style="color:#ececed">* </span><span style="color:#3bc2c2">HelloWorld</span><span style="color:#ececed">::</span><span style="color:#3bc2c2">scene</span><span style="color:#ececed">()</span></div>
<div style="position:absolute;right:548.40px;top:2.20px;height:10px;line-height:10px;font-size:6.6px;font-family:'Liberation Sans', sans-serif;color:#8f9096;font-weight:normal;transform:scaleX(0.88);transform-origin:100% 50%;-webkit-text-stroke:0.1px #8f9096">8</div>
<div style="position:absolute;left:19.70px;top:2.80px;height:10px;line-height:10px;font-size:6.377px;font-family:'Liberation Mono', monospace;font-weight:bold;white-space:pre"><span style="color:#ececed">{</span></div>
<div style="position:absolute;right:548.40px;top:10.59px;height:10px;line-height:10px;font-size:6.6px;font-family:'Liberation Sans', sans-serif;color:#8f9096;font-weight:normal;transform:scaleX(0.88);transform-origin:100% 50%;-webkit-text-stroke:0.1px #8f9096">9</div>
<div style="position:absolute;left:19.70px;top:11.19px;height:10px;line-height:10px;font-size:6.377px;font-family:'Liberation Mono', monospace;font-weight:bold;white-space:pre"><span style="color:#ececed">     </span><span style="color:#d93c9f">return</span><span style="color:#ececed"> </span><span style="color:#3bc2c2">HelloWorld</span><span style="color:#ececed">::</span><span style="color:#3bc2c2">create</span><span style="color:#ececed">();</span></div>
<div style="position:absolute;right:548.40px;top:18.98px;height:10px;line-height:10px;font-size:6.6px;font-family:'Liberation Sans', sans-serif;color:#8f9096;font-weight:normal;transform:scaleX(0.88);transform-origin:100% 50%;-webkit-text-stroke:0.1px #8f9096">10</div>
<div style="position:absolute;left:19.70px;top:19.58px;height:10px;line-height:10px;font-size:6.377px;font-family:'Liberation Mono', monospace;font-weight:bold;white-space:pre"><span style="color:#ececed">}</span></div>
<div style="position:absolute;right:548.40px;top:27.37px;height:10px;line-height:10px;font-size:6.6px;font-family:'Liberation Sans', sans-serif;color:#8f9096;font-weight:normal;transform:scaleX(0.88);transform-origin:100% 50%;-webkit-text-stroke:0.1px #8f9096">11</div>
<div style="position:absolute;right:548.40px;top:35.76px;height:10px;line-height:10px;font-size:6.6px;font-family:'Liberation Sans', sans-serif;color:#8f9096;font-weight:normal;transform:scaleX(0.88);transform-origin:100% 50%;-webkit-text-stroke:0.1px #8f9096">12</div>
<div style="position:absolute;left:19.70px;top:36.36px;height:10px;line-height:10px;font-size:6.377px;font-family:'Liberation Mono', monospace;font-weight:bold;white-space:pre"><span style="color:#4fbd4c">// on &quot;init&quot; you need to initialize your instance</span></div>
<div style="position:absolute;right:548.40px;top:44.15px;height:10px;line-height:10px;font-size:6.6px;font-family:'Liberation Sans', sans-serif;color:#8f9096;font-weight:normal;transform:scaleX(0.88);transform-origin:100% 50%;-webkit-text-stroke:0.1px #8f9096">13</div>
<div style="position:absolute;left:19.70px;top:44.75px;height:10px;line-height:10px;font-size:6.377px;font-family:'Liberation Mono', monospace;font-weight:bold;white-space:pre"><span style="color:#d93c9f">bool</span><span style="color:#ececed"> </span><span style="color:#3bc2c2">HelloWorld</span><span style="color:#ececed">::init()</span></div>
<div style="position:absolute;right:548.40px;top:52.54px;height:10px;line-height:10px;font-size:6.6px;font-family:'Liberation Sans', sans-serif;color:#8f9096;font-weight:normal;transform:scaleX(0.88);transform-origin:100% 50%;-webkit-text-stroke:0.1px #8f9096">14</div>
<div style="position:absolute;left:19.70px;top:53.14px;height:10px;line-height:10px;font-size:6.377px;font-family:'Liberation Mono', monospace;font-weight:bold;white-space:pre"><span style="color:#ececed">{</span></div>
<div style="position:absolute;right:548.40px;top:60.93px;height:10px;line-height:10px;font-size:6.6px;font-family:'Liberation Sans', sans-serif;color:#8f9096;font-weight:normal;transform:scaleX(0.88);transform-origin:100% 50%;-webkit-text-stroke:0.1px #8f9096">15</div>
<div style="position:absolute;left:19.70px;top:61.53px;height:10px;line-height:10px;font-size:6.377px;font-family:'Liberation Mono', monospace;font-weight:bold;white-space:pre"><span style="color:#4fbd4c">    //////////////////////////////</span></div>
<div style="position:absolute;right:548.40px;top:69.32px;height:10px;line-height:10px;font-size:6.6px;font-family:'Liberation Sans', sans-serif;color:#8f9096;font-weight:normal;transform:scaleX(0.88);transform-origin:100% 50%;-webkit-text-stroke:0.1px #8f9096">16</div>
<div style="position:absolute;left:19.70px;top:69.92px;height:10px;line-height:10px;font-size:6.377px;font-family:'Liberation Mono', monospace;font-weight:bold;white-space:pre"><span style="color:#4fbd4c">    // 1. super init first</span></div>
<div style="position:absolute;right:548.40px;top:77.71px;height:10px;line-height:10px;font-size:6.6px;font-family:'Liberation Sans', sans-serif;color:#8f9096;font-weight:normal;transform:scaleX(0.88);transform-origin:100% 50%;-webkit-text-stroke:0.1px #8f9096">17</div>
<div style="position:absolute;left:19.70px;top:78.31px;height:10px;line-height:10px;font-size:6.377px;font-family:'Liberation Mono', monospace;font-weight:bold;white-space:pre"><span style="color:#ececed">    </span><span style="color:#d93c9f">if</span><span style="color:#ececed"> ( !</span><span style="color:#3bc2c2">Scene</span><span style="color:#ececed">::</span><span style="color:#3bc2c2">init</span><span style="color:#ececed">() )</span></div>
<div style="position:absolute;right:548.40px;top:86.10px;height:10px;line-height:10px;font-size:6.6px;font-family:'Liberation Sans', sans-serif;color:#8f9096;font-weight:normal;transform:scaleX(0.88);transform-origin:100% 50%;-webkit-text-stroke:0.1px #8f9096">18</div>
<div style="position:absolute;left:19.70px;top:86.70px;height:10px;line-height:10px;font-size:6.377px;font-family:'Liberation Mono', monospace;font-weight:bold;white-space:pre"><span style="color:#ececed">    {</span></div>
<div style="position:absolute;right:548.40px;top:94.49px;height:10px;line-height:10px;font-size:6.6px;font-family:'Liberation Sans', sans-serif;color:#8f9096;font-weight:normal;transform:scaleX(0.88);transform-origin:100% 50%;-webkit-text-stroke:0.1px #8f9096">19</div>
<div style="position:absolute;left:19.70px;top:95.09px;height:10px;line-height:10px;font-size:6.377px;font-family:'Liberation Mono', monospace;font-weight:bold;white-space:pre"><span style="color:#ececed">        </span><span style="color:#d93c9f">return</span><span style="color:#ececed"> </span><span style="color:#d93c9f">false</span><span style="color:#ececed">;</span></div>
<div style="position:absolute;right:548.40px;top:102.88px;height:10px;line-height:10px;font-size:6.6px;font-family:'Liberation Sans', sans-serif;color:#8f9096;font-weight:normal;transform:scaleX(0.88);transform-origin:100% 50%;-webkit-text-stroke:0.1px #8f9096">20</div>
<div style="position:absolute;left:19.70px;top:103.48px;height:10px;line-height:10px;font-size:6.377px;font-family:'Liberation Mono', monospace;font-weight:bold;white-space:pre"><span style="color:#ececed">    }</span></div>
<div style="position:absolute;right:548.40px;top:111.27px;height:10px;line-height:10px;font-size:6.6px;font-family:'Liberation Sans', sans-serif;color:#8f9096;font-weight:normal;transform:scaleX(0.88);transform-origin:100% 50%;-webkit-text-stroke:0.1px #8f9096">21</div>
<div style="position:absolute;left:19.70px;top:111.87px;height:10px;line-height:10px;font-size:6.377px;font-family:'Liberation Mono', monospace;font-weight:bold;white-space:pre"><span style="color:#ececed">    </span><span style="color:#3bc2c2">FileUtils</span><span style="color:#ececed">::</span><span style="color:#3bc2c2">getInstance</span><span style="color:#ececed">()-&gt;</span><span style="color:#3bc2c2">addSearchPath</span><span style="color:#ececed">(</span><span style="color:#e5484f">&quot;csb/&quot;</span><span style="color:#ececed">);</span></div>
<div style="position:absolute;right:548.40px;top:119.66px;height:10px;line-height:10px;font-size:6.6px;font-family:'Liberation Sans', sans-serif;color:#8f9096;font-weight:normal;transform:scaleX(0.88);transform-origin:100% 50%;-webkit-text-stroke:0.1px #8f9096">22</div>
<div style="position:absolute;left:19.70px;top:120.26px;height:10px;line-height:10px;font-size:6.377px;font-family:'Liberation Mono', monospace;font-weight:bold;white-space:pre"><span style="color:#ececed">    </span><span style="color:#d93c9f">auto</span><span style="color:#ececed"> node = </span><span style="color:#3bc2c2">CSLoader</span><span style="color:#ececed">::</span><span style="color:#3bc2c2">createNode</span><span style="color:#ececed">(</span><span style="color:#e5484f">&quot;MainScene.csb&quot;</span><span style="color:#ececed">);</span></div>
<div style="position:absolute;right:548.40px;top:128.05px;height:10px;line-height:10px;font-size:6.6px;font-family:'Liberation Sans', sans-serif;color:#8f9096;font-weight:normal;transform:scaleX(0.88);transform-origin:100% 50%;-webkit-text-stroke:0.1px #8f9096">23</div>
<div style="position:absolute;left:19.70px;top:128.65px;height:10px;line-height:10px;font-size:6.377px;font-family:'Liberation Mono', monospace;font-weight:bold;white-space:pre"><span style="color:#ececed">    </span><span style="color:#3bc2c2">addChild</span><span style="color:#ececed">(node);</span></div>
<div style="position:absolute;right:548.40px;top:136.44px;height:10px;line-height:10px;font-size:6.6px;font-family:'Liberation Sans', sans-serif;color:#8f9096;font-weight:normal;transform:scaleX(0.88);transform-origin:100% 50%;-webkit-text-stroke:0.1px #8f9096">24</div>
<div style="position:absolute;left:19.70px;top:137.04px;height:10px;line-height:10px;font-size:6.377px;font-family:'Liberation Mono', monospace;font-weight:bold;white-space:pre"><span style="color:#4fbd4c">//    auto visibleSize = Director::getInstance()-&gt;getVisibleSize();</span></div>
<div style="position:absolute;right:548.40px;top:144.83px;height:10px;line-height:10px;font-size:6.6px;font-family:'Liberation Sans', sans-serif;color:#ffffff;font-weight:bold;transform:scaleX(0.88);transform-origin:100% 50%;-webkit-text-stroke:0.1px #ffffff">25</div>
<div style="position:absolute;left:19.70px;top:145.43px;height:10px;line-height:10px;font-size:6.377px;font-family:'Liberation Mono', monospace;font-weight:bold;white-space:pre"><span style="color:#4fbd4c">//    auto origin = Director::getInstance()-&gt;getVisibleOrigin();</span></div>
<div style="position:absolute;right:548.40px;top:153.22px;height:10px;line-height:10px;font-size:6.6px;font-family:'Liberation Sans', sans-serif;color:#8f9096;font-weight:normal;transform:scaleX(0.88);transform-origin:100% 50%;-webkit-text-stroke:0.1px #8f9096">26</div>
<div style="position:absolute;right:548.40px;top:161.61px;height:10px;line-height:10px;font-size:6.6px;font-family:'Liberation Sans', sans-serif;color:#8f9096;font-weight:normal;transform:scaleX(0.88);transform-origin:100% 50%;-webkit-text-stroke:0.1px #8f9096">27</div>
<div style="position:absolute;left:19.70px;top:162.21px;height:10px;line-height:10px;font-size:6.377px;font-family:'Liberation Mono', monospace;font-weight:bold;white-space:pre"><span style="color:#4fbd4c">    //////////////////////////////</span></div>
<div style="position:absolute;right:548.40px;top:170.00px;height:10px;line-height:10px;font-size:6.6px;font-family:'Liberation Sans', sans-serif;color:#8f9096;font-weight:normal;transform:scaleX(0.88);transform-origin:100% 50%;-webkit-text-stroke:0.1px #8f9096">28</div>
<div style="position:absolute;left:19.70px;top:170.60px;height:10px;line-height:10px;font-size:6.377px;font-family:'Liberation Mono', monospace;font-weight:bold;white-space:pre"><span style="color:#4fbd4c">    // 2. add a menu item with &quot;X&quot; image, which is clicked to quit the program</span></div>
<div style="position:absolute;right:548.40px;top:178.39px;height:10px;line-height:10px;font-size:6.6px;font-family:'Liberation Sans', sans-serif;color:#8f9096;font-weight:normal;transform:scaleX(0.88);transform-origin:100% 50%;-webkit-text-stroke:0.1px #8f9096">29</div>
<div style="position:absolute;left:19.70px;top:178.99px;height:10px;line-height:10px;font-size:6.377px;font-family:'Liberation Mono', monospace;font-weight:bold;white-space:pre"><span style="color:#4fbd4c">    //    you may modify it.</span></div>
<div style="position:absolute;right:548.40px;top:186.78px;height:10px;line-height:10px;font-size:6.6px;font-family:'Liberation Sans', sans-serif;color:#8f9096;font-weight:normal;transform:scaleX(0.88);transform-origin:100% 50%;-webkit-text-stroke:0.1px #8f9096">30</div>
</div>
<div style="position:absolute;left:408.0px;top:244.60px;height:8px;line-height:8px;font-size:5.0px;font-family:'Liberation Mono', monospace;color:#d0d0d2;font-weight:bold;white-space:pre">{</div>
<div style="position:absolute;left:408.0px;top:250.34px;height:8px;line-height:8px;font-size:5.0px;font-family:'Liberation Mono', monospace;color:#d0d0d2;font-weight:bold;white-space:pre">     gl.supports_OES_map_buffer: true</div>
<div style="position:absolute;left:408.0px;top:256.08px;height:8px;line-height:8px;font-size:5.0px;font-family:'Liberation Mono', monospace;color:#d0d0d2;font-weight:bold;white-space:pre">     gl.supports_vertex_array_object: true</div>
<div style="position:absolute;left:408.0px;top:261.82px;height:8px;line-height:8px;font-size:5.0px;font-family:'Liberation Mono', monospace;color:#d0d0d2;font-weight:bold;white-space:pre">     cocos2d.x.version: cocos2d-x-3.16</div>
<div style="position:absolute;left:408.0px;top:267.56px;height:8px;line-height:8px;font-size:5.0px;font-family:'Liberation Mono', monospace;color:#d0d0d2;font-weight:bold;white-space:pre">     gl.vendor: Apple Inc.</div>
<div style="position:absolute;left:408.0px;top:273.30px;height:8px;line-height:8px;font-size:5.0px;font-family:'Liberation Mono', monospace;color:#d0d0d2;font-weight:bold;white-space:pre">     gl.supports_PVRTC: true</div>
<div style="position:absolute;left:408.0px;top:279.04px;height:8px;line-height:8px;font-size:5.0px;font-family:'Liberation Mono', monospace;color:#d0d0d2;font-weight:bold;white-space:pre">     gl.renderer: Apple Software Renderer</div>
<div style="position:absolute;left:408.0px;top:284.78px;height:8px;line-height:8px;font-size:5.0px;font-family:'Liberation Mono', monospace;color:#d0d0d2;font-weight:bold;white-space:pre">     cocos2d.x.compiled_with_profiler: false</div>
<div style="position:absolute;left:408.0px;top:290.52px;height:8px;line-height:8px;font-size:5.0px;font-family:'Liberation Mono', monospace;color:#d0d0d2;font-weight:bold;white-space:pre">     gl.supports_S3TC: false</div>
<div style="position:absolute;left:408.0px;top:296.26px;height:8px;line-height:8px;font-size:5.0px;font-family:'Liberation Mono', monospace;color:#d0d0d2;font-weight:bold;white-space:pre">     gl.version: OpenGL ES 2.0 APPLE-14.0.15</div>
<div style="position:absolute;left:408.0px;top:302.00px;height:8px;line-height:8px;font-size:5.0px;font-family:'Liberation Mono', monospace;color:#d0d0d2;font-weight:bold;white-space:pre">     cocos2d.x.build_type: DEBUG</div>
<div style="position:absolute;left:408.0px;top:307.74px;height:8px;line-height:8px;font-size:5.0px;font-family:'Liberation Mono', monospace;color:#d0d0d2;font-weight:bold;white-space:pre">     gl.max_texture_size: 4096</div>
<div style="position:absolute;left:408.0px;top:313.48px;height:8px;line-height:8px;font-size:5.0px;font-family:'Liberation Mono', monospace;color:#d0d0d2;font-weight:bold;white-space:pre">     gl.supports_ETC1: false</div>
<div style="position:absolute;left:408.0px;top:319.22px;height:8px;line-height:8px;font-size:5.0px;font-family:'Liberation Mono', monospace;color:#d0d0d2;font-weight:bold;white-space:pre">     gl.supports_BGRA8888: false</div>
<div style="position:absolute;left:408.0px;top:324.96px;height:8px;line-height:8px;font-size:5.0px;font-family:'Liberation Mono', monospace;color:#d0d0d2;font-weight:bold;white-space:pre">     gl.max_texture_units: 8</div>
<div style="position:absolute;left:408.0px;top:330.70px;height:8px;line-height:8px;font-size:5.0px;font-family:'Liberation Mono', monospace;color:#d0d0d2;font-weight:bold;white-space:pre">     gl.max_samples_allowed: 4</div>
<div style="position:absolute;left:408.0px;top:336.44px;height:8px;line-height:8px;font-size:5.0px;font-family:'Liberation Mono', monospace;color:#d0d0d2;font-weight:bold;white-space:pre">     gl.supports_OES_packed_depth_stencil: true</div>
<div style="position:absolute;left:408.0px;top:342.18px;height:8px;line-height:8px;font-size:5.0px;font-family:'Liberation Mono', monospace;color:#d0d0d2;font-weight:bold;white-space:pre">     gl.supports_ATITC: false</div>
<div style="position:absolute;left:408.0px;top:347.92px;height:8px;line-height:8px;font-size:5.0px;font-family:'Liberation Mono', monospace;color:#d0d0d2;font-weight:bold;white-space:pre">     gl.supports_NPOT: true</div>
<div style="position:absolute;left:408.0px;top:353.66px;height:8px;line-height:8px;font-size:5.0px;font-family:'Liberation Mono', monospace;color:#d0d0d2;font-weight:bold;white-space:pre">     gl.supports_discard_framebuffer: true</div>
<div style="position:absolute;left:408.0px;top:359.40px;height:8px;line-height:8px;font-size:5.0px;font-family:'Liberation Mono', monospace;color:#d0d0d2;font-weight:bold;white-space:pre">     cocos2d.x.compiled_with_gl_state_cache: true</div>
<div style="position:absolute;left:408.0px;top:365.14px;height:8px;line-height:8px;font-size:5.0px;font-family:'Liberation Mono', monospace;color:#d0d0d2;font-weight:bold;white-space:pre">     gl.supports_OES_depth24: true</div>
<div style="position:absolute;left:408.0px;top:370.88px;height:8px;line-height:8px;font-size:5.0px;font-family:'Liberation Mono', monospace;color:#d0d0d2;font-weight:bold;white-space:pre">}</div>
<div style="position:absolute;left:408.0px;top:388.10px;height:8px;line-height:8px;font-size:5.0px;font-family:'Liberation Mono', monospace;color:#d0d0d2;font-weight:bold;white-space:pre">cocos2d: fullPathForFilename: No file found at MainScene.csb. Possible missing file.</div>
<div style="position:absolute;left:408.0px;top:393.84px;height:8px;line-height:8px;font-size:5.0px;font-family:'Liberation Mono', monospace;color:#d0d0d2;font-weight:bold;white-space:pre">Assertion failed: (FileUtils::getInstance()-&gt;isFileExist(fullPath)), function</div>
<div style="position:absolute;left:408.0px;top:399.58px;height:8px;line-height:8px;font-size:5.0px;font-family:'Liberation Mono', monospace;color:#d0d0d2;font-weight:bold;white-space:pre">nodeWithFlatBuffersFile, file /Users/yy/Documents/build/cocos2d-x-3.16/cocos/editor-support/</div>
<div style="position:absolute;left:408.0px;top:405.32px;height:8px;line-height:8px;font-size:5.0px;font-family:'Liberation Mono', monospace;color:#d0d0d2;font-weight:bold;white-space:pre">cocostudio/ActionTimeline/CSLoader.cpp, line 953.</div>
<div style="position:absolute;left:408.0px;top:411.06px;height:8px;line-height:8px;font-size:5.0px;font-family:'Liberation Mono', monospace;color:#35b8b0;font-weight:bold;white-space:pre">(lldb)</div>
<svg style="position:absolute;left:123.0px;top:20.0px;overflow:visible" width="6.6" height="5.8" viewBox="0 0 6.6 5.8"><g fill="none" stroke="#6a6a6a" stroke-width="0.6"><rect x="0.4" y="0.4" width="2.5" height="2.2" rx="0.7"/><rect x="3.7" y="0.4" width="2.5" height="2.2" rx="0.7"/><rect x="0.4" y="3.2" width="2.5" height="2.2" rx="0.7"/><rect x="3.7" y="3.2" width="2.5" height="2.2" rx="0.7"/></g></svg>
<svg style="position:absolute;left:135.3px;top:20.3px;overflow:visible" width="3.4" height="5.2" viewBox="0 0 3.4 5.2"><path d="M2.9 0.4 L0.6 2.6 L2.9 4.8" fill="none" stroke="#4a4a4a" stroke-width="0.9"/></svg>
<svg style="position:absolute;left:145.3px;top:20.3px;overflow:visible" width="3.4" height="5.2" viewBox="0 0 3.4 5.2"><path d="M0.5 0.4 L2.8 2.6 L0.5 4.8" fill="none" stroke="#4a4a4a" stroke-width="0.9"/></svg>
<svg style="position:absolute;left:155.2px;top:19.6px;overflow:visible" width="5" height="6.5" viewBox="0 0 5 6.5"><path d="M0 0 H3.4 L5 1.6 V6.5 H0 Z" fill="#3f86e0"/><path d="M1.1 5.2 L2.5 2.2 L3.9 5.2 M1.6 4.2 H3.4" fill="none" stroke="#fff" stroke-width="0.5"/></svg>
<div style="position:absolute;left:162.8px;top:20.02px;height:7.35px;line-height:7.35px;font-size:5.25px;color:#161616;font-weight:normal;font-family:'Liberation Sans', sans-serif;white-space:pre;-webkit-text-stroke:0.1px #161616;">cocos2d_tests</div>
<svg style="position:absolute;left:198.2px;top:20.0px;overflow:visible" width="2" height="5.8" viewBox="0 0 2 5.8"><path d="M0.3 0.3 L1.6 2.9 L0.3 5.5" fill="none" stroke="#8a8a8a" stroke-width="0.55"/></svg>
<svg style="position:absolute;left:202.2px;top:20.3px;overflow:visible" width="6.8" height="5.2" viewBox="0 0 6.8 5.2"><path d="M0 0.6 Q0 0 0.6 0 H2.5 L3.2 0.8 H6.2 Q6.8 0.8 6.8 1.4 V4.6 Q6.8 5.2 6.2 5.2 H0.6 Q0 5.2 0 4.6 Z" fill="#f2c232"/><rect x="0" y="1.4" width="6.8" height="0.4" fill="#d9a622"/></svg>
<div style="position:absolute;left:210.5px;top:19.92px;height:7.56px;line-height:7.56px;font-size:5.4px;color:#161616;font-weight:normal;font-family:'Liberation Sans', sans-serif;white-space:pre;-webkit-text-stroke:0.1px #161616;">tests</div>
<svg style="position:absolute;left:224.5px;top:20.0px;overflow:visible" width="2" height="5.8" viewBox="0 0 2 5.8"><path d="M0.3 0.3 L1.6 2.9 L0.3 5.5" fill="none" stroke="#8a8a8a" stroke-width="0.55"/></svg>
<svg style="position:absolute;left:227.8px;top:20.3px;overflow:visible" width="6.8" height="5.2" viewBox="0 0 6.8 5.2"><path d="M0 0.6 Q0 0 0.6 0 H2.5 L3.2 0.8 H6.2 Q6.8 0.8 6.8 1.4 V4.6 Q6.8 5.2 6.2 5.2 H0.6 Q0 5.2 0 4.6 Z" fill="#f2c232"/><rect x="0" y="1.4" width="6.8" height="0.4" fill="#d9a622"/></svg>
<div style="position:absolute;left:236.3px;top:19.82px;height:7.77px;line-height:7.77px;font-size:5.55px;color:#161616;font-weight:normal;font-family:'Liberation Sans', sans-serif;white-space:pre;-webkit-text-stroke:0.1px #161616;">cpp-empty-test</div>
<svg style="position:absolute;left:274.5px;top:20.0px;overflow:visible" width="2" height="5.8" viewBox="0 0 2 5.8"><path d="M0.3 0.3 L1.6 2.9 L0.3 5.5" fill="none" stroke="#8a8a8a" stroke-width="0.55"/></svg>
<svg style="position:absolute;left:278.6px;top:20.3px;overflow:visible" width="6.8" height="5.2" viewBox="0 0 6.8 5.2"><path d="M0 0.6 Q0 0 0.6 0 H2.5 L3.2 0.8 H6.2 Q6.8 0.8 6.8 1.4 V4.6 Q6.8 5.2 6.2 5.2 H0.6 Q0 5.2 0 4.6 Z" fill="#f2c232"/><rect x="0" y="1.4" width="6.8" height="0.4" fill="#d9a622"/></svg>
<div style="position:absolute;left:287.6px;top:20.23px;height:6.93px;line-height:6.93px;font-size:4.95px;color:#161616;font-weight:normal;font-family:'Liberation Sans', sans-serif;white-space:pre;-webkit-text-stroke:0.1px #161616;">Classes</div>
<svg style="position:absolute;left:307.3px;top:20.0px;overflow:visible" width="2" height="5.8" viewBox="0 0 2 5.8"><path d="M0.3 0.3 L1.6 2.9 L0.3 5.5" fill="none" stroke="#8a8a8a" stroke-width="0.55"/></svg>
<svg style="position:absolute;left:312.6px;top:20.0px;overflow:visible" width="5" height="5.9" viewBox="0 0 5 5.9"><path d="M0.3 0.3 H3.3 L4.7 1.7 V5.6 H0.3 Z" fill="#fff" stroke="#8a8a8a" stroke-width="0.45"/><text x="0.6" y="4.9" font-size="2.6" font-family="Liberation Sans" fill="#3a5f9a" font-weight="bold">c</text></svg>
<div style="position:absolute;left:319.6px;top:19.99px;height:7.42px;line-height:7.42px;font-size:5.3px;color:#161616;font-weight:normal;font-family:'Liberation Sans', sans-serif;white-space:pre;-webkit-text-stroke:0.1px #161616;">HelloWorldScene.cpp</div>
<svg style="position:absolute;left:371.8px;top:20.0px;overflow:visible" width="2" height="5.8" viewBox="0 0 2 5.8"><path d="M0.3 0.3 L1.6 2.9 L0.3 5.5" fill="none" stroke="#8a8a8a" stroke-width="0.55"/></svg>
<svg style="position:absolute;left:375.8px;top:20.1px;overflow:visible" width="5.7" height="5.7" viewBox="0 0 5.7 5.7"><rect x="0" y="0" width="5.7" height="5.7" rx="0.7" fill="#5c89d0"/><path d="M1.2 4.6 V1.2 L2.85 3.2 L4.5 1.2 V4.6" fill="none" stroke="#fff" stroke-width="0.6"/></svg>
<div style="position:absolute;left:384px;top:20.02px;height:7.35px;line-height:7.35px;font-size:5.25px;color:#161616;font-weight:normal;font-family:'Liberation Sans', sans-serif;white-space:pre;-webkit-text-stroke:0.1px #161616;">HelloWorld::init()</div>
<svg style="position:absolute;left:668.6px;top:20.6px;overflow:visible" width="2.6" height="4.8" viewBox="0 0 2.6 4.8"><path d="M2.2 0.3 L0.5 2.4 L2.2 4.5" fill="none" stroke="#555" stroke-width="0.7"/></svg>
<svg style="position:absolute;left:674.9px;top:20.9px;overflow:visible" width="5.4" height="4.9" viewBox="0 0 5.4 4.9"><path d="M2.7 0.2 L5.3 4.7 H0.1 Z" fill="#f2b11c"/><path d="M2.7 1.5 V3.1" stroke="#fff" stroke-width="0.6"/><circle cx="2.7" cy="3.9" r="0.3" fill="#fff"/></svg>
<svg style="position:absolute;left:683.2px;top:20.6px;overflow:visible" width="2.6" height="4.8" viewBox="0 0 2.6 4.8"><path d="M0.4 0.3 L2.1 2.4 L0.4 4.5" fill="none" stroke="#555" stroke-width="0.7"/></svg>
<svg style="position:absolute;left:124.2px;top:228.3px;overflow:visible" width="6.8" height="5.5" viewBox="0 0 6.8 5.5"><rect x="0.3" y="0.3" width="6.2" height="4.9" fill="none" stroke="#606060" stroke-width="0.6"/><path d="M2.2 1.9 H4.6 L3.4 3.3 Z" fill="#606060"/></svg>
<svg style="position:absolute;left:137.8px;top:229.3px;overflow:visible" width="7.3" height="4.6" viewBox="0 0 7.3 4.6"><path d="M0 0.3 Q0 0 0.3 0 H5.2 L7.3 2.3 L5.2 4.6 H0.3 Q0 4.6 0 4.3 Z" fill="#2e7fe6"/></svg>
<svg style="position:absolute;left:151.9px;top:228.5px;overflow:visible" width="7.2" height="5.8" viewBox="0 0 7.2 5.8"><path d="M0.4 0.2 V5.6 M1.7 0.2 V5.6" stroke="#606060" stroke-width="0.6"/><path d="M3 0.6 L6.6 2.9 L3 5.2 Z" fill="none" stroke="#606060" stroke-width="0.7" stroke-linejoin="round"/></svg>
<svg style="position:absolute;left:166.6px;top:228.6px;overflow:visible" width="6.8" height="5.8" viewBox="0 0 6.8 5.8"><path d="M0.5 3.2 L3 0.8 L5.3 3" fill="none" stroke="#606060" stroke-width="0.7"/><path d="M4.4 2.6 L6.4 3.4 L4.8 4.3 Z" fill="#606060"/><circle cx="3" cy="5" r="0.75" fill="#606060"/></svg>
<svg style="position:absolute;left:182.1px;top:228.6px;overflow:visible" width="2.8" height="6" viewBox="0 0 2.8 6"><path d="M1.4 0 V3.6" stroke="#606060" stroke-width="0.7"/><path d="M0.2 2.6 L1.4 3.9 L2.6 2.6 Z" fill="#606060"/><circle cx="1.4" cy="5.2" r="0.75" fill="#606060"/></svg>
<svg style="position:absolute;left:195.0px;top:228.6px;overflow:visible" width="5.4" height="6" viewBox="0 0 5.4 6"><path d="M2.7 4.4 V1.2" stroke="#606060" stroke-width="0.7"/><path d="M1.5 1.6 L2.7 0.2 L3.9 1.6 Z" fill="#606060"/><path d="M0.2 5.4 H5.2" stroke="#606060" stroke-width="0.8"/></svg>
<div style="position:absolute;left:204.4px;top:228.2px;width:0.5px;height:7px;background:#c9c9c9;"></div>
<svg style="position:absolute;left:209px;top:228.3px;overflow:visible" width="6.4" height="6.2" viewBox="0 0 6.4 6.2"><rect x="0.5" y="0.4" width="5.4" height="5.4" rx="2.2" fill="none" stroke="#606060" stroke-width="0.75"/><path d="M2.4 0.8 V5.4 M4 0.8 V5.4" stroke="#606060" stroke-width="0.5"/></svg>
<svg style="position:absolute;left:222.5px;top:228.3px;overflow:visible" width="7.2" height="6.2" viewBox="0 0 7.2 6.2"><circle cx="1.45" cy="1.35" r="1.0" fill="none" stroke="#606060" stroke-width="0.6"/><circle cx="1.45" cy="4.85" r="1.0" fill="none" stroke="#606060" stroke-width="0.6"/><circle cx="5.6" cy="3.1" r="1.0" fill="none" stroke="#606060" stroke-width="0.6"/><path d="M2.4 1.8 L4.65 2.7 M2.4 4.4 L4.65 3.5" stroke="#606060" stroke-width="0.55"/></svg>
<svg style="position:absolute;left:236.6px;top:228.6px;overflow:visible" width="6.2" height="5.6" viewBox="0 0 6.2 5.6"><path d="M5.9 0.3 L0.4 2.8 L3.0 3.0 L3.5 5.4 Z" fill="none" stroke="#606060" stroke-width="0.65" stroke-linejoin="round"/></svg>
<div style="position:absolute;left:246.0px;top:228.2px;width:0.5px;height:6.6px;background:#c9c9c9;"></div>
<svg style="position:absolute;left:250.0px;top:227.2px;overflow:visible" width="7" height="7.2" viewBox="0 0 7 7.2"><defs><linearGradient id="ag2" x1="0" y1="0" x2="1" y2="1"><stop offset="0" stop-color="#35c4e8"/><stop offset="1" stop-color="#1a7fb8"/></linearGradient></defs><rect x="0" y="0" width="7" height="7.2" rx="1.2" fill="url(#ag2)"/><path d="M1.1 6.6 V2.6 Q1.1 1.1 2.6 1.1 H4.4 Q5.9 1.1 5.9 2.6 V6.6 Z" fill="#15263a"/><path d="M2.3 6 V3.6 L3.5 2.5 L4.7 3.6 V6 Z" fill="#f2f2f2"/></svg>
<div style="position:absolute;left:258.8px;top:227.93px;height:7.35px;line-height:7.35px;font-size:5.25px;color:#161616;font-weight:normal;font-family:'Liberation Sans', sans-serif;white-space:pre;-webkit-text-stroke:0.1px #161616;">cpp-empty-test iOS</div>
<svg style="position:absolute;left:306.8px;top:229px;overflow:visible" width="1.8" height="5.4" viewBox="0 0 1.8 5.4"><path d="M0.2 0.2 L1.4 2.7 L0.2 5.2" fill="none" stroke="#9d9d9d" stroke-width="0.45"/></svg>
<svg style="position:absolute;left:310.2px;top:228.2px;overflow:visible" width="6.8" height="6.8" viewBox="0 0 6.8 6.8"><circle cx="3.4" cy="3.4" r="3.2" fill="#5b93d8"/><path d="M2.2 2 H4.6 M2.2 3.4 H4.6 M2.2 4.8 H4.6" stroke="#c9dcf3" stroke-width="0.6"/></svg>
<div style="position:absolute;left:319.2px;top:227.93px;height:7.35px;line-height:7.35px;font-size:5.25px;color:#161616;font-weight:normal;font-family:'Liberation Sans', sans-serif;white-space:pre;-webkit-text-stroke:0.1px #161616;">Thread 1</div>
<svg style="position:absolute;left:342.2px;top:229px;overflow:visible" width="1.8" height="5.4" viewBox="0 0 1.8 5.4"><path d="M0.2 0.2 L1.4 2.7 L0.2 5.2" fill="none" stroke="#9d9d9d" stroke-width="0.45"/></svg>
<svg style="position:absolute;left:346.6px;top:228.6px;overflow:visible" width="5.8" height="6" viewBox="0 0 5.8 6"><rect x="0" y="0" width="5.8" height="6" fill="#cfbfa4"/><circle cx="2.9" cy="3" r="1.5" fill="none" stroke="#fff" stroke-width="0.55"/></svg>
<div style="position:absolute;left:354.8px;top:228.07px;height:7.07px;line-height:7.07px;font-size:5.05px;color:#161616;font-weight:normal;font-family:'Liberation Sans', sans-serif;white-space:pre;-webkit-text-stroke:0.1px #161616;">0 __pthread_kill</div>
<div style="position:absolute;left:124.6px;top:450.76px;height:7.28px;line-height:7.28px;font-size:5.2px;color:#161616;font-weight:normal;font-family:'Liberation Sans', sans-serif;white-space:pre;-webkit-text-stroke:0.1px #161616;">Auto</div>
<svg style="position:absolute;left:137.1px;top:452.1px;overflow:visible" width="3" height="4" viewBox="0 0 3 4"><path d="M0.4 1.5 L1.5 0.3 L2.6 1.5 M0.4 2.5 L1.5 3.7 L2.6 2.5" fill="none" stroke="#555" stroke-width="0.6"/></svg>
<div style="position:absolute;left:143.0px;top:450.9px;width:0.5px;height:5.4px;background:#d4d4d4;"></div>
<svg style="position:absolute;left:146.1px;top:452.2px;overflow:visible" width="6.6" height="4" viewBox="0 0 6.6 4"><path d="M0.3 2 Q3.3 -0.6 6.3 2 Q3.3 4.6 0.3 2 Z" fill="none" stroke="#b4b4b4" stroke-width="0.5"/><circle cx="3.3" cy="2" r="0.9" fill="none" stroke="#b4b4b4" stroke-width="0.5"/></svg>
<svg style="position:absolute;left:155.5px;top:450.7px;overflow:visible" width="6.2" height="6.2" viewBox="0 0 6.2 6.2"><circle cx="3.1" cy="3.1" r="2.8" fill="none" stroke="#b4b4b4" stroke-width="0.5"/><path d="M3.1 2.7 V4.7" stroke="#b4b4b4" stroke-width="0.6"/><circle cx="3.1" cy="1.7" r="0.35" fill="#b4b4b4"/></svg>
<div style="position:absolute;left:327.3px;top:449.3px;width:75.9px;height:8.9px;background:#fff;border-radius:1px;box-shadow:0 0 0 0.55px #c8c8c8;"></div>
<svg style="position:absolute;left:329.2px;top:450.8px;overflow:visible" width="6" height="6" viewBox="0 0 6 6"><circle cx="3" cy="3" r="2.55" fill="none" stroke="#777" stroke-width="0.6"/><path d="M1.8 2.4 H4.2 L3 4 Z" fill="#777"/></svg>
<div style="position:absolute;left:336.6px;top:450.76px;height:7.28px;line-height:7.28px;font-size:5.2px;color:#c6c6c6;font-weight:normal;font-family:'Liberation Sans', sans-serif;white-space:pre;-webkit-text-stroke:0.1px #c6c6c6;">Filter</div>
<div style="position:absolute;left:410.4px;top:450.76px;height:7.28px;line-height:7.28px;font-size:5.2px;color:#161616;font-weight:normal;font-family:'Liberation Sans', sans-serif;white-space:pre;-webkit-text-stroke:0.1px #161616;">All Output</div>
<svg style="position:absolute;left:435.0px;top:451.8px;overflow:visible" width="3" height="4" viewBox="0 0 3 4"><path d="M0.4 1.5 L1.5 0.3 L2.6 1.5 M0.4 2.5 L1.5 3.7 L2.6 2.5" fill="none" stroke="#555" stroke-width="0.6"/></svg>
<div style="position:absolute;left:578.5px;top:449.3px;width:75.5px;height:8.9px;background:#fff;border-radius:1px;box-shadow:0 0 0 0.55px #c8c8c8;"></div>
<svg style="position:absolute;left:580.5px;top:450.8px;overflow:visible" width="6" height="6" viewBox="0 0 6 6"><circle cx="3" cy="3" r="2.55" fill="none" stroke="#777" stroke-width="0.6"/><path d="M1.8 2.4 H4.2 L3 4 Z" fill="#777"/></svg>
<div style="position:absolute;left:587.8px;top:450.76px;height:7.28px;line-height:7.28px;font-size:5.2px;color:#c6c6c6;font-weight:normal;font-family:'Liberation Sans', sans-serif;white-space:pre;-webkit-text-stroke:0.1px #c6c6c6;">Filter</div>
<svg style="position:absolute;left:661.6px;top:450.6px;overflow:visible" width="5" height="6.4" viewBox="0 0 5 6.4"><path d="M0.2 1.2 H4.8 M1.7 1.2 V0.3 H3.3 V1.2" fill="none" stroke="#8a8a8a" stroke-width="0.5"/><path d="M0.8 1.7 H4.2 L3.8 6.2 H1.2 Z" fill="#8a8a8a"/></svg>
<div style="position:absolute;left:670.9px;top:450.8px;width:0.5px;height:6.2px;background:#cfcfcf;"></div>
<svg style="position:absolute;left:673.3px;top:450.9px;overflow:visible" width="6.8" height="5.8" viewBox="0 0 6.8 5.8"><rect x="0.3" y="0.3" width="6.2" height="5.2" fill="none" stroke="#2f7fe2" stroke-width="0.6"/><rect x="0.3" y="0.3" width="2" height="5.2" fill="#2f7fe2"/></svg>
<svg style="position:absolute;left:681.3px;top:450.9px;overflow:visible" width="6.8" height="5.8" viewBox="0 0 6.8 5.8"><rect x="0.3" y="0.3" width="6.2" height="5.2" fill="none" stroke="#2f7fe2" stroke-width="0.6"/><rect x="4.5" y="0.3" width="2" height="5.2" fill="#2f7fe2"/></svg>
</div></body></html>
